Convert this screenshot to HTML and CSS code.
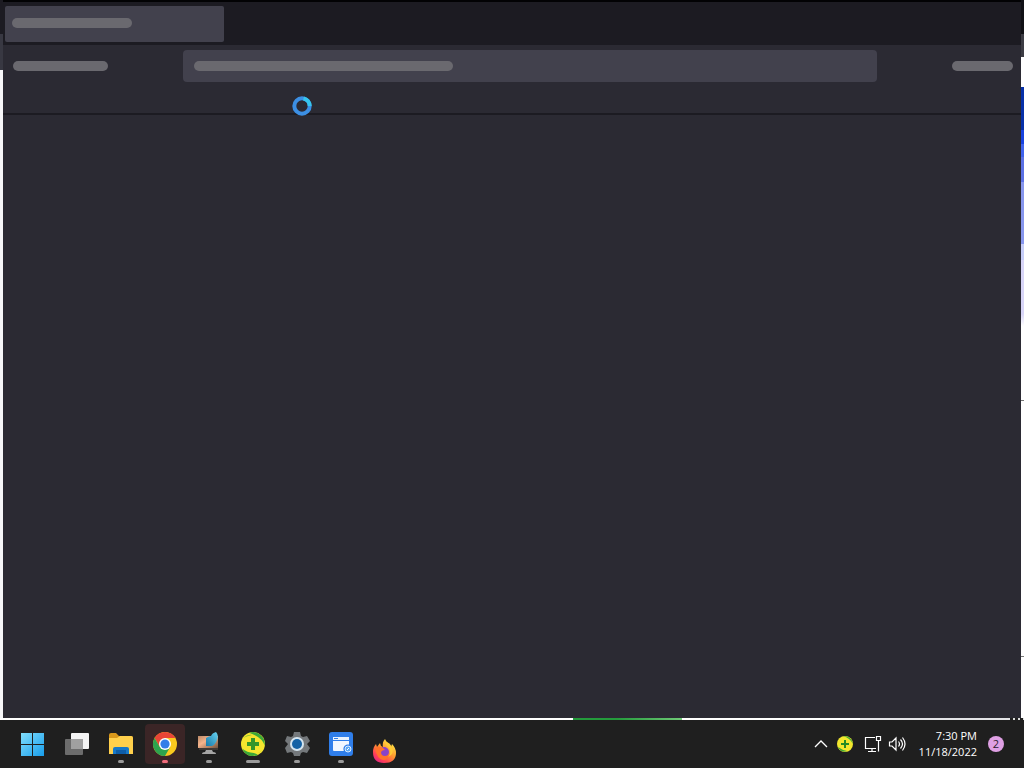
FILE: index.html
```html
<!DOCTYPE html>
<html lang="en">
<head>
<meta charset="utf-8">
<meta name="viewport" content="width=device-width, initial-scale=1">
<title>Desktop</title>
<link rel="stylesheet" href="styles.css">
</head>
<body>
<main class="desktop">
  <div class="edge edge-left"></div>
  <section class="window" aria-label="Browser window loading" aria-busy="true">
    <div class="tab-strip">
      <div class="tab"><span class="bone bone-tab"></span></div>
    </div>
    <div class="toolbar">
      <span class="bone bone-nav"></span>
      <div class="address"><span class="bone bone-url"></span></div>
      <span class="bone bone-menu"></span>
    </div>
    <div class="page"></div>
  </section>
  <div class="edge edge-right"></div>
  <div class="edge-bottom"><span class="green"></span><span class="grip"></span></div>
  <svg class="busy-cursor" viewBox="0 0 20 20" aria-hidden="true">
    <circle cx="10" cy="10" r="7.7" fill="none" stroke="#3c8fe4" stroke-width="4"/>
    <path d="M11.500 2.450A7.700 7.700 0 0 1 17.700 10" fill="none" stroke="#36c5ee" stroke-width="4"/>
  </svg>
</main>
<footer class="taskbar">
  <nav class="apps" aria-label="Taskbar">
    <button class="app" aria-label="Start">
      <svg class="icon" viewBox="0 0 24 24">
        <defs><linearGradient id="win" x1="0" y1="0" x2="24" y2="24" gradientUnits="userSpaceOnUse"><stop offset="0" stop-color="#83e0fd"/><stop offset="1" stop-color="#159bea"/></linearGradient></defs>
        <path fill="url(#win)" d="M0 1h11v11H0zM12 1h11v11H12zM0 13h11v11H0zM12 13h11v11H12z"/>
      </svg>
    </button>
    <button class="app" aria-label="Task view">
      <svg class="icon" viewBox="0 0 24 24">
        <rect x="6" y="1" width="18" height="16" rx="1" fill="#f4f4f4"/>
        <rect x="0" y="7" width="18" height="16" rx="1" fill="#6c6c6c"/>
        <path d="M6 7h12v10H6z" fill="#a0a0a0"/>
      </svg>
    </button>
    <button class="app" aria-label="File Explorer">
      <svg class="icon" viewBox="0 0 24 24">
        <path d="M0 3q0-2 2-2h5l3 3h12q2 0 2 2v3H0z" fill="#d9981b"/>
        <path d="M0 6h8l3-2h11q2 0 2 2v16H0z" fill="#ffd04c"/>
        <path d="M4 22v-5q0-2 2-2h12q2 0 2 2v5z" fill="#1678c8"/>
        <path d="M7 18h10v4H7z" fill="#0d5da8"/>
      </svg>
      <span class="mark"></span>
    </button>
    <button class="app active" aria-label="Google Chrome">
      <svg class="icon" viewBox="0 0 24 24">
        <circle cx="12" cy="12" r="12" fill="#fbc91e"/>
        <path d="M12 12V6h10.4A12 12 0 0 0 1.6 6L6.8 15z" fill="#e94537"/>
        <path d="M1.6 6A12 12 0 0 0 12 24l5.2-9H6.8z" fill="#2da44e"/>
        <circle cx="12" cy="12" r="6" fill="#fff"/>
        <circle cx="12" cy="12" r="4.6" fill="#337ee8"/>
      </svg>
      <span class="mark"></span>
    </button>
    <button class="app" aria-label="Display tool">
      <svg class="icon" viewBox="0 0 24 24">
        <defs>
          <linearGradient id="mon" x1="0" y1="0" x2="1" y2="1"><stop offset="0" stop-color="#b98968"/><stop offset=".4" stop-color="#f6b48c"/><stop offset="1" stop-color="#71533f"/></linearGradient>
          <linearGradient id="brush" x1="0" y1="1" x2="1" y2="0"><stop offset="0" stop-color="#1777a8"/><stop offset="1" stop-color="#68d5f1"/></linearGradient>
        </defs>
        <path d="M2 5h19v13H2z" fill="#3e3835"/>
        <path d="M1 4h20v12H1z" fill="url(#mon)"/>
        <path d="M9 14V6q3-2 5-2 1-3 5-4 3 3 1 8-2 5-5 6z" fill="url(#brush)"/>
        <path d="M9 18h6l1 2q3 0 3 2H5q0-2 3-2z" fill="#a5a5a5"/>
      </svg>
      <span class="mark"></span>
    </button>
    <button class="app" aria-label="360 Total Security">
      <svg class="icon" viewBox="0 0 24 24">
        <circle cx="12" cy="12" r="12" fill="#f5e52e"/>
        <path d="M8 .7Q18-2 23 7.500q1 3 .8 6Q21 5 8 .7zM1 16.500q5 4 12 4.500 3 1 4 2Q6 27 1 16.500z" fill="#3ba838"/>
        <path d="M2 6q5-4 9-3-5 1-9 3zM22 18q-3 3-6 3 4-1 6-3z" fill="#84bf35"/>
        <path d="M10 6h4v4h4v4h-4v4h-4v-4H6v-4h4z" fill="#34962b"/>
      </svg>
      <span class="mark wide"></span>
    </button>
    <button class="app" aria-label="Settings">
      <svg class="icon" viewBox="0 0 24 24">
        <path d="M9 0h6l1 4 2 1 4-1 3 5-3 3 3 4-3 5-4-1-2 1-1 3H9l-1-3-2-1-4 1-2-5 3-4-3-3 2-5 4 1 2-1z" fill="#74787b"/>
        <circle cx="12" cy="12" r="7" fill="#d5e5ef"/>
        <circle cx="12" cy="12" r="5" fill="#1462a5"/>
      </svg>
      <span class="mark"></span>
    </button>
    <button class="app" aria-label="Window manager">
      <svg class="icon" viewBox="0 0 24 24">
        <rect width="24" height="24" rx="3" fill="#2f7eea"/>
        <path d="M4 5h16v3H4z" fill="#e9f3ff"/>
        <path d="M5 6h4v1H5z" fill="#2f7eea"/>
        <path d="M4 9h16v9q0 1-1 1H5q-1 0-1-1z" fill="#f1f7ff"/>
        <circle cx="19" cy="17" r="4.600" fill="#2f7eea"/>
        <circle cx="19" cy="17" r="3" fill="#5ca9f5" stroke="#d8eaff"/>
        <path d="M18 18l2-2" stroke="#fff"/>
      </svg>
      <span class="mark"></span>
    </button>
    <button class="app launching" aria-label="Firefox">
      <svg class="icon" viewBox="0 0 24 24">
        <defs><linearGradient id="fox" x1="20" y1="2" x2="4" y2="23" gradientUnits="userSpaceOnUse"><stop offset="0" stop-color="#fff04a"/><stop offset=".45" stop-color="#ff9a2e"/><stop offset=".8" stop-color="#ff4056"/><stop offset="1" stop-color="#e52580"/></linearGradient></defs>
        <path d="M12 0q1 3 4 5 1 1 2 3l1-3q4 4 4 9 0 10-12 10Q0 24 0 13q0-5 3-8l1 3 3-4 1 3 2 1q-1-5 2-8z" fill="url(#fox)"/>
        <circle cx="11" cy="13" r="5" fill="#8844c9"/>
        <path d="M2 9q4-3 8 0l2 2q-3 0-4 2 0 4 4 4 3 0 4-2 0 6-6 6-6-1-8-12z" fill="#ff732b"/>
        <path d="M12 2q1 4 4 7 3 5-1 9 7-3 4-10-2-4-5-5z" fill="#ffcb36"/>
      </svg>
    </button>
  </nav>
  <div class="tray">
    <button class="tray-button" aria-label="Show hidden icons">
      <svg class="tray-icon" viewBox="0 0 18 18"><path d="M3 12l6-6 6 6" fill="none" stroke="#fff" stroke-width="1.3"/></svg>
    </button>
    <button class="tray-button shield" aria-label="Security status">
      <svg class="tray-icon" viewBox="0 0 18 18">
        <circle cx="9" cy="9" r="8" fill="#f3e72e"/>
        <path d="M7 1.300Q15 0 17 9q-3-6-10-7.700zM2 12q4 3 9 4-6 2-9-4z" fill="#3ba838"/>
        <path d="M8 5h2v3h3v2h-3v3H8v-3H5V8h3z" fill="#238b24"/>
      </svg>
    </button>
    <button class="tray-button status" aria-label="Network and volume">
      <svg class="tray-icon" viewBox="0 0 18 18"><path d="M11 2.500H1.500v11H12M4 16.500h8M8 13.500v3M12.500 1.500h4v4h-4zM14.500 5.500v11" fill="none" stroke="#fff" stroke-width="1.200"/></svg>
      <svg class="tray-icon" viewBox="0 0 18 18"><path d="M1.500 7h2.500l4-4v12l-4-4H1.500zM10.500 6.500q2 2.500 0 5M12.500 4.500q4 4.500 0 9M14.500 2.500q5 6.500 0 13" fill="none" stroke="#fff" stroke-width="1.200"/></svg>
    </button>
    <button class="clock"><time datetime="2022-11-18T19:30">7:30 PM<br>11/18/2022</time></button>
    <button class="badge" aria-label="2 notifications">2</button>
  </div>
</footer>
</body>
</html>
```
FILE: styles.css
```css
* { box-sizing: border-box; }

body {
  margin: 0;
  min-height: 100vh;
  display: flex;
  flex-direction: column;
  background: #1f1f1f;
  font-family: "Open Sans", "Noto Sans", sans-serif;
}

button {
  margin: 0;
  padding: 0;
  border: 0;
  background: none;
  color: #fff;
  font: inherit;
}

.desktop {
  position: relative;
  flex: 1;
  display: grid;
  grid-template-columns: 3px 1fr 3px;
  grid-template-rows: 1fr 2px;
}

.edge-left {
  background: linear-gradient(#1c1b22 0 34px, #383842 34px 70px, #f7f7f9 70px);
}

.edge-right {
  background: linear-gradient(#111116 0 34px, #3c3c44 34px 57px, #fff 57px 87px, #0730a8 87px 130px, #1742df 130px 144px, #3f62ec 144px 157px, #5b70e4 157px 182px, #8796ed 182px 244px, #c6cdf8 244px 260px, #d8d5f7 260px 314px, #fff 326px 400px, #777 400px 401px, #fff 401px 656px, #777 656px 657px, #fff 657px);
}

.edge-bottom {
  grid-column: 1 / -1;
  display: flex;
  justify-content: space-between;
  padding-left: 56%;
  background: linear-gradient(90deg, #fff 0 84%, #e4e4e8 84%);
}

.green {
  width: 24%;
  background: linear-gradient(90deg, #249b3c 40%, #70ca78);
}

.grip {
  width: 14px;
  background: repeating-linear-gradient(90deg, #222 0 3px, #ddd 3px 5px);
}

.window {
  display: flex;
  flex-direction: column;
  border-top: 2px solid #020204;
  background: #2b2a33;
}

.tab-strip {
  height: 43px;
  padding: 4px 2px;
  background: #1c1b22;
}

.tab {
  width: 219px;
  height: 36px;
  padding: 12px 7px;
  border-radius: 2px;
  background: #42414d;
}

.bone {
  display: block;
  height: 10px;
  border-radius: 5px;
  background: #6a696f;
}

.bone-tab { width: 120px; }
.bone-nav { width: 95px; }
.bone-url { width: 259px; }
.bone-menu { width: 61px; }

.toolbar {
  display: grid;
  grid-template-columns: 95px 1fr 61px;
  column-gap: 75px;
  align-items: center;
  height: 70px;
  padding: 0 8px 26px 10px;
  border-bottom: 2px solid #1c1b22;
}

.address {
  height: 32px;
  padding: 11px;
  border-radius: 4px;
  background: #42414d;
}

.page { flex: 1; }

.busy-cursor {
  position: absolute;
  left: 292px;
  top: 96px;
  width: 20px;
  height: 20px;
}

.taskbar {
  display: flex;
  justify-content: space-between;
  height: 48px;
  padding: 4px 20px 4px 13px;
  background: #1f1f1f;
}

.apps {
  display: flex;
  gap: 4px;
}

.app {
  width: 40px;
  height: 40px;
  display: grid;
  grid-template-rows: 32px 3px;
  justify-items: center;
  align-content: start;
  row-gap: 4px;
  border-radius: 4px;
}

.icon {
  width: 24px;
  height: 24px;
  margin-top: 8px;
  overflow: visible;
}

.mark {
  width: 6px;
  height: 3px;
  border-radius: 2px;
  background: #9a9a9a;
}

.mark.wide { width: 14px; }

.active { background: #3b2526; }
.active .mark { background: #f06c7c; }

.launching { padding-top: 7px; }

.tray {
  display: flex;
  align-items: center;
}

.tray-button {
  height: 40px;
  display: flex;
  align-items: center;
}

.tray-icon {
  width: 18px;
  height: 18px;
}

.shield { margin-left: 6px; }

.status {
  gap: 6px;
  margin-left: 10px;
}

.clock {
  margin-left: 13px;
  font-size: 11px;
  line-height: 16px;
  text-align: right;
}

.badge {
  width: 16px;
  height: 16px;
  margin-left: 11px;
  border-radius: 50%;
  background: #dfa0e4;
  color: #2c1c2e;
  font-size: 11px;
  line-height: 16px;
}
```
